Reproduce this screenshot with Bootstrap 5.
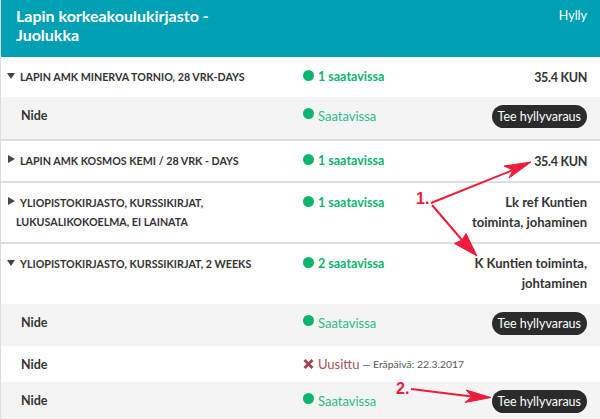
<!DOCTYPE html>
<html lang="fi">
<head>
<meta charset="utf-8">
<title>Hylly</title>
<link href="https://cdn.jsdelivr.net/npm/bootstrap@5.3.0/dist/css/bootstrap.min.css" rel="stylesheet">
<style>
html,body{height:419px;overflow:hidden;}
body{font-family:"Lato","Noto Sans",sans-serif;color:#333;background:#fff;position:relative;}
.holdings{border-left:1px solid #ddd;}
.head-bar{background:#00a0b4;color:#fff;height:57px;padding:7px 13px 0 15px;}
.head-title{font-size:16px;font-weight:700;line-height:18.5px;width:240px;}
.head-shelf{font-size:12.5px;line-height:18px;}
.hrow{padding:0 13px 0 6px;}
.hrow.sep{border-bottom:2px solid #ddd;}
.hrow.alt{background:#f4f4f4;}
.c-loc{width:296px;flex:none;}
.c-stat{flex:1 1 auto;white-space:nowrap;}
.c-shelf{text-align:right;font-size:13px;font-weight:700;line-height:19.5px;}
.c-code{font-size:12.5px;letter-spacing:-.3px;margin-top:1px;}
.loc-name{font-size:10.7px;font-weight:700;line-height:20px;text-transform:uppercase;}
.name-wrap{display:block;margin-left:-4px;margin-top:-1px;}
.tri-d{width:0;height:0;border-left:4px solid transparent;border-right:4px solid transparent;border-top:6px solid #444;flex:none;margin:6px 5px 0 0;}
.tri-r{width:0;height:0;border-top:4.500px solid transparent;border-bottom:4.500px solid transparent;border-left:7px solid #444;flex:none;margin:4px 5px 0 1px;}
.item-name{font-size:12.5px;font-weight:700;padding:1px 0 0 14px;line-height:20px;}
.dot{width:11px;height:11px;border-radius:50%;background:#0cb56f;flex:none;margin:3px 4px 0 0;}
.ok-b{font-size:12.5px;font-weight:700;color:#0cb56f;line-height:20px;}
.ok{font-size:13px;color:#2cbd85;line-height:20px;padding-top:1px;}
.bad{font-size:13px;color:#a5525a;line-height:20px;}
.due{font-size:10.400px;color:#555;line-height:20px;}
.x-svg{flex:none;margin:5px 4px 0 0;}
.btn-hold{background:#2b2b2b;color:#fff;font-size:12.5px;line-height:15px;padding:4px 6px;border-radius:12px;border:0;}
.btn-hold:hover{background:#2b2b2b;color:#fff;}
.mark-num{font-family:"Liberation Sans",sans-serif;font-weight:700;font-size:16px;color:#ed1c3c;position:absolute;line-height:1;}
.overlay{position:absolute;left:0;top:0;pointer-events:none;}
.h40{height:40px}.h42{height:42px}.h44{height:44px}.h61{height:61px}.h60{height:60px}.h36{height:36px}.h38{height:38px}
.pt-r{padding-top:10px;}
.pt-i{padding-top:8px;}
</style>
</head>
<body>
<div class="holdings">
  <div class="head-bar d-flex justify-content-between">
    <div class="head-title">Lapin korkeakoulukirjasto - Juolukka</div>
    <div class="head-shelf">Hylly</div>
  </div>

  <div class="hrow h40 d-flex pt-r">
    <div class="c-loc d-flex"><span class="tri-d"></span><span class="loc-name">Lapin AMK Minerva Tornio, 28 vrk-days</span></div>
    <div class="c-stat d-flex align-self-start"><span class="dot"></span><span class="ok-b">1 saatavissa</span></div>
    <div class="c-shelf c-code">35.4 KUN</div>
  </div>
  <div class="hrow alt sep h44 d-flex pt-i">
    <div class="c-loc item-name">Nide</div>
    <div class="c-stat d-flex"><span class="dot"></span><span class="ok">Saatavissa</span></div>
    <div class="d-flex align-items-start"><button type="button" class="btn btn-hold">Tee hyllyvaraus</button></div>
  </div>

  <div class="hrow sep h42 d-flex pt-r">
    <div class="c-loc d-flex"><span class="tri-r"></span><span class="loc-name">Lapin AMK Kosmos Kemi / 28 vrk - days</span></div>
    <div class="c-stat d-flex align-self-start"><span class="dot"></span><span class="ok-b">1 saatavissa</span></div>
    <div class="c-shelf c-code">35.4 KUN</div>
  </div>

  <div class="hrow sep h61 d-flex pt-r">
    <div class="c-loc d-flex"><span class="tri-r"></span><span class="loc-name">Yliopistokirjasto, Kurssikirjat,<span class="name-wrap">Lukusalikokoelma, ei lainata</span></span></div>
    <div class="c-stat d-flex align-self-start"><span class="dot"></span><span class="ok-b">1 saatavissa</span></div>
    <div class="c-shelf">Lk ref Kuntien<br>toiminta, johaminen</div>
  </div>

  <div class="hrow h60 d-flex pt-r">
    <div class="c-loc d-flex"><span class="tri-d"></span><span class="loc-name">Yliopistokirjasto, Kurssikirjat, 2 weeks</span></div>
    <div class="c-stat d-flex align-self-start"><span class="dot"></span><span class="ok-b">2 saatavissa</span></div>
    <div class="c-shelf">K Kuntien toiminta,<br>johtaminen</div>
  </div>
  <div class="hrow alt h42 d-flex pt-i">
    <div class="c-loc item-name">Nide</div>
    <div class="c-stat d-flex"><span class="dot"></span><span class="ok">Saatavissa</span></div>
    <div class="d-flex align-items-start"><button type="button" class="btn btn-hold">Tee hyllyvaraus</button></div>
  </div>
  <div class="hrow h36 d-flex pt-i">
    <div class="c-loc item-name">Nide</div>
    <div class="c-stat d-flex">
      <svg class="x-svg" width="11" height="10" viewBox="0 0 11 10" aria-hidden="true"><path d="M1.500 1 L9.500 9 M9.500 1 L1.500 9" stroke="#a5434b" stroke-width="2.800" fill="none"/></svg>
      <span class="bad">Uusittu</span><span class="due">&nbsp;— Eräpäivä: 22.3.2017</span>
    </div>
  </div>
  <div class="hrow alt h38 d-flex pt-i">
    <div class="c-loc item-name">Nide</div>
    <div class="c-stat d-flex"><span class="dot"></span><span class="ok">Saatavissa</span></div>
    <div class="d-flex align-items-start"><button type="button" class="btn btn-hold">Tee hyllyvaraus</button></div>
  </div>
</div>

<span class="mark-num" style="left:416px;top:191px">1.</span>
<span class="mark-num" style="left:396px;top:381px">2.</span>
<svg class="overlay" width="600" height="419" viewBox="0 0 600 419" aria-hidden="true">
  <g fill="#ed1c3c" stroke="#ed1c3c" stroke-width="2">
    <line x1="431" y1="203" x2="513" y2="170"/>
    <path stroke-width="1" d="M531 162 L504 166 L513 170 L509 178 Z"/>
    <line x1="432" y1="205" x2="462" y2="240"/>
    <path stroke-width="1" d="M477 256 L454.500 243.500 L462 240 L466 233.500 Z"/>
    <line x1="411" y1="389" x2="472" y2="396.500"/>
    <path stroke-width="1" d="M491 397.500 L466 390 L472 396.500 L465 402.500 Z"/>
  </g>
</svg>
</body>
</html>
